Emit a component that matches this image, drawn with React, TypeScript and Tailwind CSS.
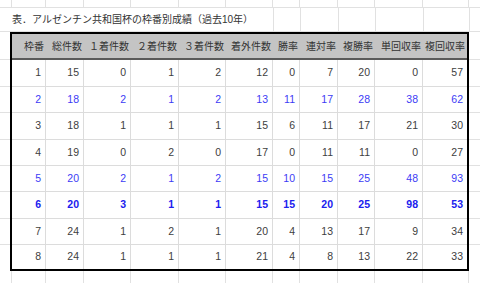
const font = "font-['Liberation_Sans','Noto_Sans_CJK_JP',sans-serif]";

// outer sheet columns (px widths incl. right gridline)
const sheetCols = [
  "w-[12px]",
  "w-[34px]",
  "w-[38px]",
  "w-[47px]",
  "w-[48px]",
  "w-[47px]",
  "w-[47px]",
  "w-[27px]",
  "w-[38px]",
  "w-[37px]",
  "w-[48px]",
  "w-[46px]",
];

// table inner columns
const tableCols = [
  "w-[34px]",
  "w-[38px]",
  "w-[47px]",
  "w-[48px]",
  "w-[47px]",
  "w-[47px]",
  "w-[27px]",
  "w-[38px]",
  "w-[37px]",
  "w-[48px]",
  "w-[44px]",
];

const headers = [
  "枠番",
  "総件数",
  "１着件数",
  "２着件数",
  "３着件数",
  "着外件数",
  "勝率",
  "連対率",
  "複勝率",
  "単回収率",
  "複回収率",
];

type Row = { values: number[]; tone: "plain" | "blue" | "strong" };

const rows: Row[] = [
  { values: [1, 15, 0, 1, 2, 12, 0, 7, 20, 0, 57], tone: "plain" },
  { values: [2, 18, 2, 1, 2, 13, 11, 17, 28, 38, 62], tone: "blue" },
  { values: [3, 18, 1, 1, 1, 15, 6, 11, 17, 21, 30], tone: "plain" },
  { values: [4, 19, 0, 2, 0, 17, 0, 11, 11, 0, 27], tone: "plain" },
  { values: [5, 20, 2, 1, 2, 15, 10, 15, 25, 48, 93], tone: "blue" },
  { values: [6, 20, 3, 1, 1, 15, 15, 20, 25, 98, 53], tone: "strong" },
  { values: [7, 24, 1, 2, 1, 20, 4, 13, 17, 9, 34], tone: "plain" },
  { values: [8, 24, 1, 1, 1, 21, 4, 8, 13, 22, 33], tone: "plain" },
];

const rowHeights = [
  "h-[27px] border-b",
  "h-[26px] border-b",
  "h-[27px] border-b",
  "h-[26px] border-b",
  "h-[26px] border-b",
  "h-[27px] border-b",
  "h-[26px] border-b",
  "h-[24px]",
];

const toneClass = {
  plain: "text-[#404040]",
  blue: "text-[#3c3cf5]",
  strong: "text-[#2020ee] font-bold",
};

function GridRow({ height }: { height: string }) {
  return (
    <div className={`flex ${height}`}>
      {sheetCols.map((w, i) => (
        <div key={i} className={`${w} shrink-0 border-r border-b border-[#e1e1e1]`} />
      ))}
      <div className="flex-1 border-b border-[#e1e1e1]" />
    </div>
  );
}

function Strip({ width }: { width: string }) {
  return (
    <div className={`flex ${width} shrink-0 flex-col`}>
      <div className="h-[28px] border-b border-[#e1e1e1]" />
      {rowHeights.map((h, i) => (
        <div key={i} className={`${h} border-[#e1e1e1]`} />
      ))}
    </div>
  );
}

export default function App() {
  return (
    <div className={`h-[283px] w-[480px] overflow-hidden bg-white ${font}`}>
      <GridRow height="h-[8px]" />

      <div className="flex h-[24px] border-b border-[#e1e1e1]">
        <div className="flex w-[273px] shrink-0 items-center pl-[12px] text-[10px] whitespace-nowrap text-[#333]">
          表．アルゼンチン共和国杯の枠番別成績（過去10年）
        </div>
        {sheetCols.slice(7).map((w, i) => (
          <div key={i} className={`${w} shrink-0 border-l border-[#e1e1e1]`} />
        ))}
        <div className="flex-1 border-l border-[#e1e1e1]" />
      </div>

      <div className="flex">
        <Strip width="w-[10px]" />

        <div className="w-[459px] shrink-0 border-2 border-black">
          <div className="flex h-[26px] border-b-2 border-[#5a5a5a] bg-[#c4c4c4]">
            {headers.map((label, i) => (
              <div
                key={label}
                className={`${tableCols[i]} flex shrink-0 items-center justify-end pr-[2px] text-[10px] whitespace-nowrap text-[#333]`}
              >
                {label}
              </div>
            ))}
          </div>

          {rows.map((row, r) => (
            <div key={r} className={`flex ${rowHeights[r]} border-[#dcdcdc]`}>
              {row.values.map((v, i) => (
                <div
                  key={i}
                  className={`${tableCols[i]} flex shrink-0 items-center justify-end pr-[4px] text-[10.5px] ${toneClass[row.tone]} ${
                    i < row.values.length - 1 ? "border-r border-[#dcdcdc]" : ""
                  }`}
                >
                  {v}
                </div>
              ))}
            </div>
          ))}
        </div>

        <Strip width="flex-1" />
      </div>

      <div className="flex h-[12px]">
        {sheetCols.map((w, i) => (
          <div key={i} className={`${w} shrink-0 border-r border-[#e1e1e1]`} />
        ))}
        <div className="flex-1" />
      </div>
    </div>
  );
}
